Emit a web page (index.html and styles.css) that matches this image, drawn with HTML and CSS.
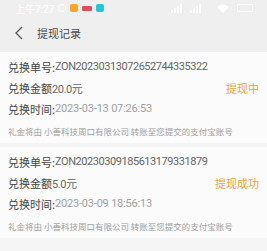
FILE: index.html
```html
<!DOCTYPE html>
<html lang="zh-CN">
<head>
    <meta charset="UTF-8">
    <meta name="viewport" content="width=device-width, initial-scale=1.0">
    <title>提现记录</title>
    <link rel="stylesheet" href="styles.css">
</head>
<body>
    <div class="top">
        <div class="statusbar">
            <span class="time">上午7:27</span>
            <span class="sicon alarm"></span>
            <span class="sicon app-orange"></span>
            <span class="sicon app-red"></span>
            <span class="sicon app-teal"></span>
            <span class="spacer"></span>
            <svg class="signal" width="38" height="9" viewBox="0 0 38 9">
                <rect x="0" y="6" width="2" height="3" fill="#fff"/>
                <rect x="3" y="4" width="2" height="5" fill="#fff"/>
                <rect x="6" y="2" width="2" height="7" fill="#fff"/>
                <rect x="9" y="0" width="2" height="9" fill="#fff"/>
                <rect x="19" y="6" width="2" height="3" fill="#fff"/>
                <rect x="22" y="4" width="2" height="5" fill="#fff"/>
                <rect x="25" y="2" width="2" height="7" fill="#fff"/>
                <rect x="28" y="0" width="2" height="9" fill="#fff"/>
            </svg>
            <svg class="wifi" width="12" height="9" viewBox="0 0 12 9">
                <path d="M0 3 Q6 -2 12 3 L6 9 Z" fill="#fff"/>
            </svg>
            <span class="battery"></span>
        </div>
        <div class="navbar">
            <svg class="back" width="10" height="14" viewBox="0 0 10 14">
                <path d="M8 1 L2 7 L8 13" fill="none" stroke="#555" stroke-width="1.3"/>
            </svg>
            <span class="title">提现记录</span>
        </div>
    </div>

    <div class="list">
        <div class="card">
            <div class="row"><span class="label">兑换单号:</span><span class="value">ZON20230313072652744335322</span></div>
            <div class="row"><span class="label">兑换金额</span><span class="value">20.0元</span><span class="status">提现中</span></div>
            <div class="row"><span class="label">兑换时间:</span><span class="value light">2023-03-13 07:26:53</span></div>
            <div class="note">礼金将由 小善科技周口有限公司 转账至您提交的支付宝账号</div>
        </div>
        <div class="card">
            <div class="row"><span class="label">兑换单号:</span><span class="value">ZON20230309185613179331879</span></div>
            <div class="row"><span class="label">兑换金额</span><span class="value">5.0元</span><span class="status">提现成功</span></div>
            <div class="row"><span class="label">兑换时间:</span><span class="value light">2023-03-09 18:56:13</span></div>
            <div class="note">礼金将由 小善科技周口有限公司 转账至您提交的支付宝账号</div>
        </div>
    </div>
</body>
</html>
```

FILE: styles.css
```css
body {
    margin: 0;
    font-family: "Noto Sans CJK SC", "Noto Sans", sans-serif;
    background-color: #f5f5f5;
    color: #333;
}
.top {
    background-color: #efefef;
    height: 52px;
}
.statusbar {
    display: flex;
    align-items: center;
    height: 16px;
    padding: 0 14px 0 15px;
    gap: 4px;
}
.time {
    color: #fff;
    font-size: 10px;
    font-family: "Roboto", sans-serif;
}
.sicon {
    width: 8px;
    height: 8px;
    border-radius: 2px;
}
.alarm {
    border: 1px solid #fff;
    border-radius: 50%;
    width: 6px;
    height: 6px;
}
.app-orange { background-color: #f5a623; }
.app-red { background-color: #e0505a; width: 10px; height: 5px; border-radius: 1px; }
.app-teal { background-color: #26c6da; }
.spacer { flex: 1; }
.wifi { margin-left: 4px; }
.battery {
    width: 14px;
    height: 6px;
    border: 1px solid #fff;
    border-radius: 2px;
    margin-left: 4px;
}
.navbar {
    display: flex;
    align-items: center;
    height: 34px;
    padding-left: 14px;
}
.back {
    margin-right: 13px;
}
.title {
    font-size: 11px;
    color: #4a4a4a;
}
.card {
    background-color: #fbfbfb;
    padding: 4px 8px 0 8px;
    margin-bottom: 4px;
}
.row {
    display: flex;
    align-items: center;
    height: 21px;
    font-size: 11px;
}
.label {
    color: #444;
}
.value {
    color: #666;
    font-family: "Roboto", "Noto Sans CJK SC", sans-serif;
    letter-spacing: -0.45px;
}
.value.light {
    color: #a0a0a0;
    letter-spacing: -0.2px;
}
.status {
    margin-left: auto;
    color: #e9a43c;
}
.note {
    font-size: 8.5px;
    color: #a0a0a0;
    height: 24px;
    line-height: 24px;
    white-space: nowrap;
}
```
